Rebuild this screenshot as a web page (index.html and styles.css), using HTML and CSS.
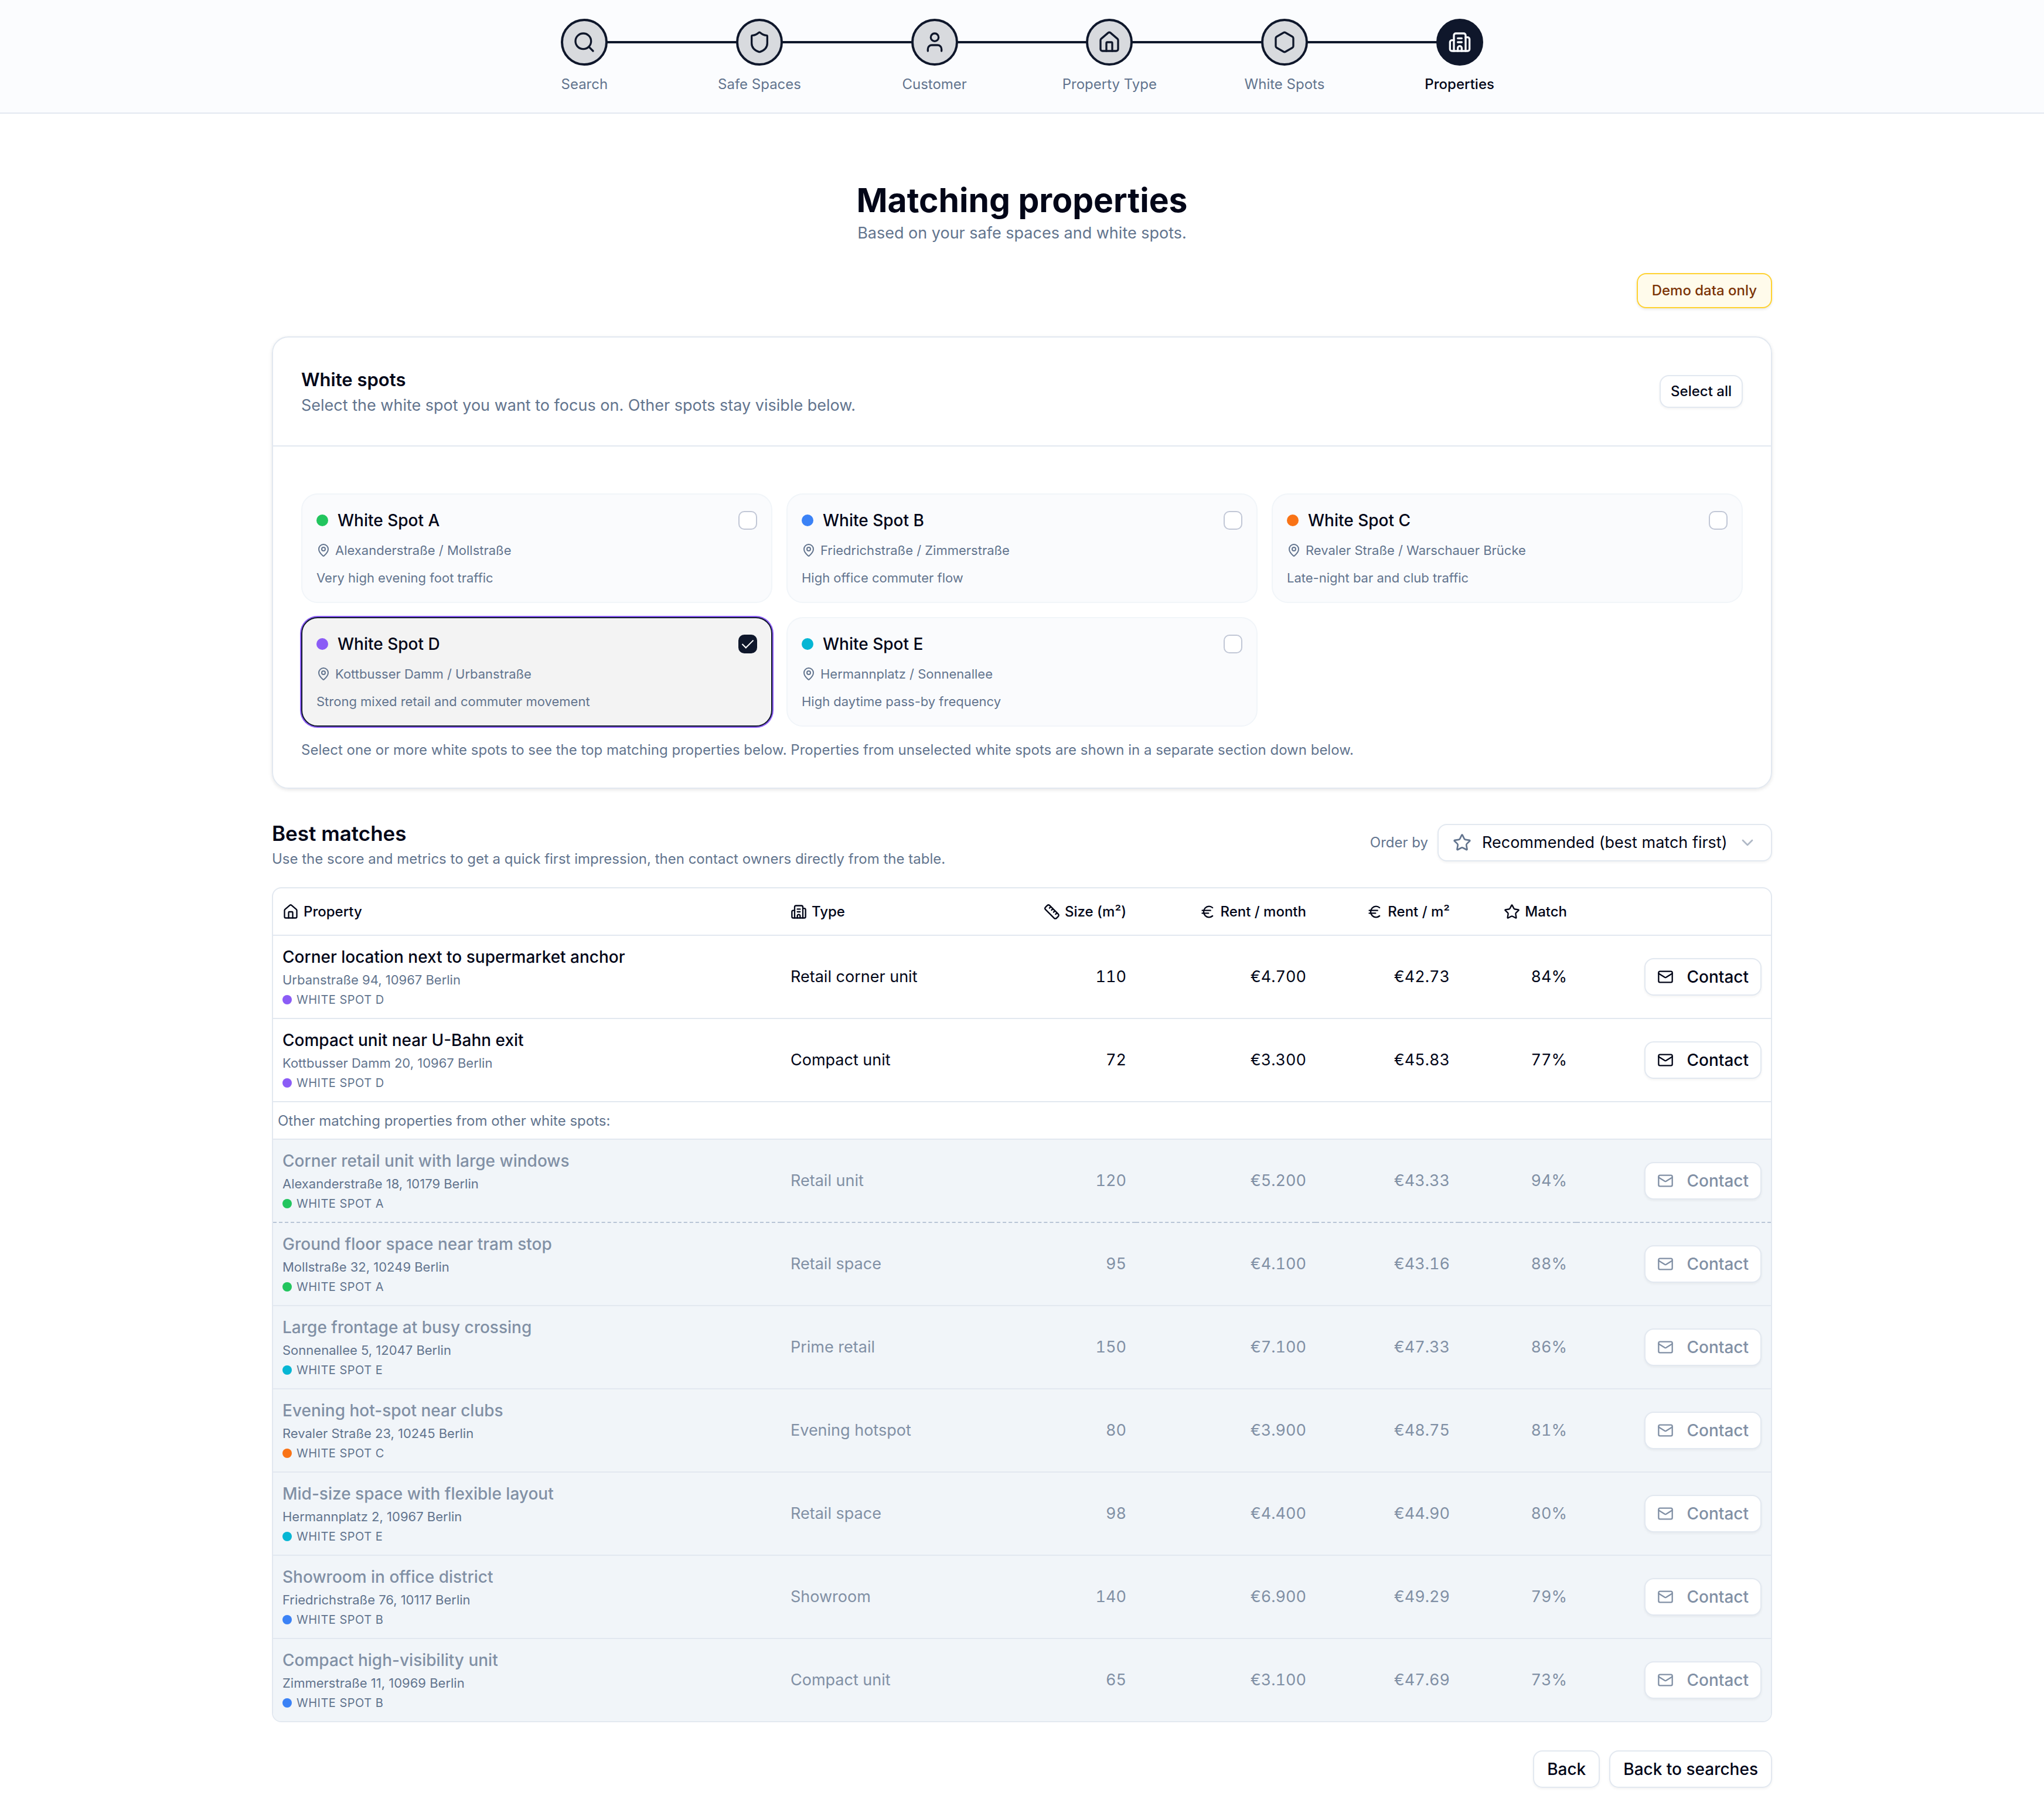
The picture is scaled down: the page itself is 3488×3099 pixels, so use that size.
FILE: index.html
```html
<!DOCTYPE html>
<html lang="en">
<head>
  <meta charset="utf-8">
  <title>Matching properties</title>
  <link rel="stylesheet" href="styles.css">
</head>
<body>
  <svg class="sprite" aria-hidden="true">
    <symbol id="i-search" viewBox="0 0 24 24"><circle cx="11" cy="11" r="8"/><path d="m21 21-4.3-4.3"/></symbol>
    <symbol id="i-shield" viewBox="0 0 24 24"><path d="M20 13c0 5-3.5 7.5-7.66 8.95a1 1 0 0 1-.67-.01C7.5 20.5 4 18 4 13V6a1 1 0 0 1 1-1c2 0 4.5-1.2 6.24-2.72a1.17 1.17 0 0 1 1.52 0C14.51 3.81 17 5 19 5a1 1 0 0 1 1 1z"/></symbol>
    <symbol id="i-user" viewBox="0 0 24 24"><path d="M19 21v-2a4 4 0 0 0-4-4H9a4 4 0 0 0-4 4v2"/><circle cx="12" cy="7" r="4"/></symbol>
    <symbol id="i-house" viewBox="0 0 24 24"><path d="M15 21v-8a1 1 0 0 0-1-1h-4a1 1 0 0 0-1 1v8"/><path d="M3 10a2 2 0 0 1 .709-1.528l7-6a2 2 0 0 1 2.582 0l7 6A2 2 0 0 1 21 10v9a2 2 0 0 1-2 2H5a2 2 0 0 1-2-2z"/></symbol>
    <symbol id="i-hexagon" viewBox="0 0 24 24"><path d="M21 16V8a2 2 0 0 0-1-1.73l-7-4a2 2 0 0 0-2 0l-7 4A2 2 0 0 0 3 8v8a2 2 0 0 0 1 1.73l7 4a2 2 0 0 0 2 0l7-4A2 2 0 0 0 21 16z"/></symbol>
    <symbol id="i-building" viewBox="0 0 24 24"><path d="M10 12h4"/><path d="M10 8h4"/><path d="M14 21v-3a2 2 0 0 0-4 0v3"/><path d="M6 10H4a2 2 0 0 0-2 2v7a2 2 0 0 0 2 2h16a2 2 0 0 0 2-2V9a2 2 0 0 0-2-2h-2"/><path d="M6 21V5a2 2 0 0 1 2-2h8a2 2 0 0 1 2 2v16"/></symbol>
    <symbol id="i-pin" viewBox="0 0 24 24"><path d="M20 10c0 4.993-5.539 10.193-7.399 11.799a1 1 0 0 1-1.202 0C9.539 20.193 4 14.993 4 10a8 8 0 0 1 16 0"/><circle cx="12" cy="10" r="3"/></symbol>
    <symbol id="i-ruler" viewBox="0 0 24 24"><path d="M21.3 15.3a2.4 2.4 0 0 1 0 3.4l-2.6 2.6a2.4 2.4 0 0 1-3.4 0L2.7 8.7a2.41 2.41 0 0 1 0-3.4l2.6-2.6a2.41 2.41 0 0 1 3.4 0Z"/><path d="m14.5 12.5 2-2"/><path d="m11.5 9.5 2-2"/><path d="m8.5 6.5 2-2"/><path d="m17.5 15.5 2-2"/></symbol>
    <symbol id="i-euro" viewBox="0 0 24 24"><path d="M4 10h12"/><path d="M4 14h9"/><path d="M19 6a7.7 7.7 0 0 0-5.2-2A7.9 7.9 0 0 0 6 12c0 4.4 3.5 8 7.8 8 2 0 3.8-.8 5.2-2"/></symbol>
    <symbol id="i-star" viewBox="0 0 24 24"><path d="M11.525 2.295a.53.53 0 0 1 .95 0l2.31 4.679a2.123 2.123 0 0 0 1.595 1.16l5.166.756a.53.53 0 0 1 .294.904l-3.736 3.638a2.123 2.123 0 0 0-.611 1.878l.882 5.14a.53.53 0 0 1-.771.56l-4.618-2.428a2.122 2.122 0 0 0-1.973 0L6.396 21.01a.53.53 0 0 1-.77-.56l.881-5.139a2.122 2.122 0 0 0-.611-1.879L2.16 9.795a.53.53 0 0 1 .294-.906l5.165-.755a2.122 2.122 0 0 0 1.597-1.16z"/></symbol>
    <symbol id="i-mail" viewBox="0 0 24 24"><rect x="2" y="4" width="20" height="16" rx="2"/><path d="m22 7-8.991 5.727a2 2 0 0 1-2.009 0L2 7"/></symbol>
    <symbol id="i-chevron" viewBox="0 0 24 24"><path d="m6 9 6 6 6-6"/></symbol>
  </svg>

  <header class="topbar">
    <ol class="steps">
      <li class="step"><span class="step-circle"><svg class="icon icon-lg"><use href="#i-search"/></svg></span>Search</li>
      <li class="step"><span class="step-circle"><svg class="icon icon-lg"><use href="#i-shield"/></svg></span>Safe Spaces</li>
      <li class="step"><span class="step-circle"><svg class="icon icon-lg"><use href="#i-user"/></svg></span>Customer</li>
      <li class="step"><span class="step-circle"><svg class="icon icon-lg"><use href="#i-house"/></svg></span>Property Type</li>
      <li class="step"><span class="step-circle"><svg class="icon icon-lg"><use href="#i-hexagon"/></svg></span>White Spots</li>
      <li class="step current" aria-current="step"><span class="step-circle"><svg class="icon icon-lg"><use href="#i-building"/></svg></span>Properties</li>
    </ol>
  </header>

  <main class="page">
    <div class="page-title">
      <h1>Matching properties</h1>
      <p>Based on your safe spaces and white spots.</p>
    </div>

    <div class="demo-row"><span class="demo-badge">Demo data only</span></div>

    <section class="panel">
      <div class="panel-header">
        <div>
          <h2>White spots</h2>
          <p>Select the white spot you want to focus on. Other spots stay visible below.</p>
        </div>
        <button type="button" class="btn btn-sm">Select all</button>
      </div>
      <div class="panel-body">
        <div class="spots">
          <label class="spot">
            <span class="spot-head"><span class="dot green"></span>White Spot A<input type="checkbox" class="check"></span>
            <span class="spot-address"><svg class="icon icon-xs"><use href="#i-pin"/></svg>Alexanderstraße / Mollstraße</span>
            <span class="spot-note">Very high evening foot traffic</span>
          </label>
          <label class="spot">
            <span class="spot-head"><span class="dot blue"></span>White Spot B<input type="checkbox" class="check"></span>
            <span class="spot-address"><svg class="icon icon-xs"><use href="#i-pin"/></svg>Friedrichstraße / Zimmerstraße</span>
            <span class="spot-note">High office commuter flow</span>
          </label>
          <label class="spot">
            <span class="spot-head"><span class="dot orange"></span>White Spot C<input type="checkbox" class="check"></span>
            <span class="spot-address"><svg class="icon icon-xs"><use href="#i-pin"/></svg>Revaler Straße / Warschauer Brücke</span>
            <span class="spot-note">Late-night bar and club traffic</span>
          </label>
          <label class="spot selected">
            <span class="spot-head"><span class="dot purple"></span>White Spot D<input type="checkbox" class="check" checked></span>
            <span class="spot-address"><svg class="icon icon-xs"><use href="#i-pin"/></svg>Kottbusser Damm / Urbanstraße</span>
            <span class="spot-note">Strong mixed retail and commuter movement</span>
          </label>
          <label class="spot">
            <span class="spot-head"><span class="dot cyan"></span>White Spot E<input type="checkbox" class="check"></span>
            <span class="spot-address"><svg class="icon icon-xs"><use href="#i-pin"/></svg>Hermannplatz / Sonnenallee</span>
            <span class="spot-note">High daytime pass-by frequency</span>
          </label>
        </div>
        <p class="hint">Select one or more white spots to see the top matching properties below. Properties from unselected white spots are shown in a separate section down below.</p>
      </div>
    </section>

    <section class="matches">
      <div class="matches-header">
        <div>
          <h2>Best matches</h2>
          <p>Use the score and metrics to get a quick first impression, then contact owners directly from the table.</p>
        </div>
        <div class="order">
          <label for="order">Order by</label>
          <div class="select-wrap">
            <svg class="icon icon-md select-star"><use href="#i-star"/></svg>
            <select id="order">
              <option>Recommended (best match first)</option>
            </select>
            <svg class="icon icon-md select-chevron"><use href="#i-chevron"/></svg>
          </div>
        </div>
      </div>

      <div class="table-wrap">
        <table>
          <colgroup>
            <col>
            <col class="col-type">
            <col class="col-size">
            <col class="col-rent">
            <col class="col-sqm">
            <col class="col-match">
            <col class="col-action">
          </colgroup>
          <thead>
            <tr>
              <th><span class="th"><svg class="icon icon-sm"><use href="#i-house"/></svg>Property</span></th>
              <th><span class="th"><svg class="icon icon-sm"><use href="#i-building"/></svg>Type</span></th>
              <th class="num"><span class="th"><svg class="icon icon-sm"><use href="#i-ruler"/></svg>Size (m²)</span></th>
              <th class="num"><span class="th"><svg class="icon icon-sm"><use href="#i-euro"/></svg>Rent / month</span></th>
              <th class="num"><span class="th"><svg class="icon icon-sm"><use href="#i-euro"/></svg>Rent / m²</span></th>
              <th class="num"><span class="th"><svg class="icon icon-sm"><use href="#i-star"/></svg>Match</span></th>
              <th></th>
            </tr>
          </thead>
          <tbody>
            <tr>
              <td>
                <div class="name">Corner location next to supermarket anchor</div>
                <div class="address">Urbanstraße 94, 10967 Berlin</div>
                <div class="tag"><span class="dot dot-sm purple"></span>White Spot D</div>
              </td>
              <td>Retail corner unit</td>
              <td class="num">110</td>
              <td class="num">€4.700</td>
              <td class="num">€42.73</td>
              <td class="num">84%</td>
              <td class="num"><button type="button" class="btn btn-contact"><svg class="icon icon-sm"><use href="#i-mail"/></svg>Contact</button></td>
            </tr>
            <tr>
              <td>
                <div class="name">Compact unit near U-Bahn exit</div>
                <div class="address">Kottbusser Damm 20, 10967 Berlin</div>
                <div class="tag"><span class="dot dot-sm purple"></span>White Spot D</div>
              </td>
              <td>Compact unit</td>
              <td class="num">72</td>
              <td class="num">€3.300</td>
              <td class="num">€45.83</td>
              <td class="num">77%</td>
              <td class="num"><button type="button" class="btn btn-contact"><svg class="icon icon-sm"><use href="#i-mail"/></svg>Contact</button></td>
            </tr>
            <tr class="divider">
              <td colspan="7">Other matching properties from other white spots:</td>
            </tr>
            <tr class="other dashed">
              <td>
                <div class="name">Corner retail unit with large windows</div>
                <div class="address">Alexanderstraße 18, 10179 Berlin</div>
                <div class="tag"><span class="dot dot-sm green"></span>White Spot A</div>
              </td>
              <td>Retail unit</td>
              <td class="num">120</td>
              <td class="num">€5.200</td>
              <td class="num">€43.33</td>
              <td class="num">94%</td>
              <td class="num"><button type="button" class="btn btn-contact"><svg class="icon icon-sm"><use href="#i-mail"/></svg>Contact</button></td>
            </tr>
            <tr class="other">
              <td>
                <div class="name">Ground floor space near tram stop</div>
                <div class="address">Mollstraße 32, 10249 Berlin</div>
                <div class="tag"><span class="dot dot-sm green"></span>White Spot A</div>
              </td>
              <td>Retail space</td>
              <td class="num">95</td>
              <td class="num">€4.100</td>
              <td class="num">€43.16</td>
              <td class="num">88%</td>
              <td class="num"><button type="button" class="btn btn-contact"><svg class="icon icon-sm"><use href="#i-mail"/></svg>Contact</button></td>
            </tr>
            <tr class="other">
              <td>
                <div class="name">Large frontage at busy crossing</div>
                <div class="address">Sonnenallee 5, 12047 Berlin</div>
                <div class="tag"><span class="dot dot-sm cyan"></span>White Spot E</div>
              </td>
              <td>Prime retail</td>
              <td class="num">150</td>
              <td class="num">€7.100</td>
              <td class="num">€47.33</td>
              <td class="num">86%</td>
              <td class="num"><button type="button" class="btn btn-contact"><svg class="icon icon-sm"><use href="#i-mail"/></svg>Contact</button></td>
            </tr>
            <tr class="other">
              <td>
                <div class="name">Evening hot-spot near clubs</div>
                <div class="address">Revaler Straße 23, 10245 Berlin</div>
                <div class="tag"><span class="dot dot-sm orange"></span>White Spot C</div>
              </td>
              <td>Evening hotspot</td>
              <td class="num">80</td>
              <td class="num">€3.900</td>
              <td class="num">€48.75</td>
              <td class="num">81%</td>
              <td class="num"><button type="button" class="btn btn-contact"><svg class="icon icon-sm"><use href="#i-mail"/></svg>Contact</button></td>
            </tr>
            <tr class="other">
              <td>
                <div class="name">Mid-size space with flexible layout</div>
                <div class="address">Hermannplatz 2, 10967 Berlin</div>
                <div class="tag"><span class="dot dot-sm cyan"></span>White Spot E</div>
              </td>
              <td>Retail space</td>
              <td class="num">98</td>
              <td class="num">€4.400</td>
              <td class="num">€44.90</td>
              <td class="num">80%</td>
              <td class="num"><button type="button" class="btn btn-contact"><svg class="icon icon-sm"><use href="#i-mail"/></svg>Contact</button></td>
            </tr>
            <tr class="other">
              <td>
                <div class="name">Showroom in office district</div>
                <div class="address">Friedrichstraße 76, 10117 Berlin</div>
                <div class="tag"><span class="dot dot-sm blue"></span>White Spot B</div>
              </td>
              <td>Showroom</td>
              <td class="num">140</td>
              <td class="num">€6.900</td>
              <td class="num">€49.29</td>
              <td class="num">79%</td>
              <td class="num"><button type="button" class="btn btn-contact"><svg class="icon icon-sm"><use href="#i-mail"/></svg>Contact</button></td>
            </tr>
            <tr class="other">
              <td>
                <div class="name">Compact high-visibility unit</div>
                <div class="address">Zimmerstraße 11, 10969 Berlin</div>
                <div class="tag"><span class="dot dot-sm blue"></span>White Spot B</div>
              </td>
              <td>Compact unit</td>
              <td class="num">65</td>
              <td class="num">€3.100</td>
              <td class="num">€47.69</td>
              <td class="num">73%</td>
              <td class="num"><button type="button" class="btn btn-contact"><svg class="icon icon-sm"><use href="#i-mail"/></svg>Contact</button></td>
            </tr>
          </tbody>
        </table>
      </div>
    </section>

    <div class="actions">
      <button type="button" class="btn">Back</button>
      <button type="button" class="btn">Back to searches</button>
    </div>
  </main>
</body>
</html>
```

FILE: styles.css
```css
:root {
  --ink: #020618;
  --navy: #0f172b;
  --muted: #62748e;
  --faded: #8190a5;
  --border: #e2e8f0;
  --soft: #f1f5f9;
}
* {
  box-sizing: border-box;
}
body {
  margin: 0;
  font-family: Inter, sans-serif;
  font-size: 27px;
  line-height: 40px;
  color: var(--ink);
  background: #fff;
}
h1, h2, p, ol {
  margin: 0;
  padding: 0;
}
button, select, input {
  font: inherit;
  color: inherit;
  margin: 0;
}
.sprite {
  position: absolute;
  width: 0;
  height: 0;
}
.icon {
  flex: none;
  fill: none;
  stroke: currentColor;
  stroke-width: 2;
  stroke-linecap: round;
  stroke-linejoin: round;
}
.icon-xs { width: 24px; height: 24px; }
.icon-sm { width: 28px; height: 28px; }
.icon-md { width: 32px; height: 32px; }
.icon-lg { width: 40px; height: 40px; }

.dot {
  flex: none;
  width: 20px;
  height: 20px;
  border-radius: 50%;
}
.dot-sm {
  width: 16px;
  height: 16px;
}
.green { background: #22c55e; }
.blue { background: #3b82f6; }
.orange { background: #f97316; }
.purple { background: #8b5cf6; }
.cyan { background: #06b6d4; }

/* stepper */
.topbar {
  padding: 32px;
  background: #fbfcfe;
  border-bottom: 2px solid var(--border);
}
.steps {
  display: grid;
  grid-template-columns: repeat(6, 1fr);
  max-width: 1792px;
  margin: 0 auto;
  list-style: none;
}
.step {
  position: relative;
  display: flex;
  flex-direction: column;
  align-items: center;
  gap: 16px;
  font-size: 24px;
  line-height: 32px;
  color: var(--muted);
}
.step + .step::before {
  content: "";
  position: absolute;
  top: 38px;
  right: 50%;
  width: 100%;
  height: 4px;
  background: var(--navy);
}
.step-circle {
  position: relative;
  z-index: 1;
  display: flex;
  align-items: center;
  justify-content: center;
  width: 80px;
  height: 80px;
  border: 4px solid var(--navy);
  border-radius: 50%;
  background: #d8dade;
  color: var(--navy);
}
.step.current {
  font-weight: 500;
  color: var(--ink);
}
.step.current .step-circle {
  background: var(--navy);
  color: #f8fafc;
}

/* page */
.page {
  max-width: 2560px;
  margin: 0 auto;
  padding: 112px 0 48px;
}
.page-title {
  text-align: center;
  color: var(--muted);
}
.page-title h1 {
  font-size: 57px;
  line-height: 72px;
  font-weight: 700;
  color: var(--ink);
}
.demo-row {
  display: flex;
  justify-content: flex-end;
  margin: 48px 0;
}
.demo-badge {
  padding: 12px 24px;
  border: 2px solid #ffd230;
  border-radius: 16px;
  background: #fffbeb;
  box-shadow: 0 2px 4px rgba(0, 0, 0, 0.1);
  font-size: 24px;
  line-height: 32px;
  font-weight: 500;
  color: #7b3306;
}
.btn {
  display: inline-flex;
  align-items: center;
  justify-content: center;
  height: 64px;
  padding: 0 22px;
  border: 2px solid var(--border);
  border-radius: 16px;
  background: #fff;
  box-shadow: 0 2px 4px rgba(0, 0, 0, 0.05);
  font-size: 28px;
  font-weight: 500;
  white-space: nowrap;
}
.btn-sm {
  height: 56px;
  padding: 0 17px;
  font-size: 24px;
}
.btn-contact {
  gap: 22px;
  padding: 0 20px;
}

/* white spots */
.panel {
  border: 2px solid var(--border);
  border-radius: 28px;
  box-shadow: 0 2px 6px rgba(0, 0, 0, 0.1);
}
.panel-header {
  display: flex;
  align-items: center;
  justify-content: space-between;
  padding: 48px;
  border-bottom: 2px solid var(--border);
}
.panel-header h2 {
  font-size: 31px;
  line-height: 48px;
  font-weight: 600;
}
.panel-header p {
  color: var(--muted);
}
.panel-body {
  padding: 80px 48px 48px;
}
.spots {
  display: grid;
  grid-template-columns: repeat(3, 1fr);
  gap: 24px;
}
.spot {
  display: flex;
  flex-direction: column;
  gap: 14px;
  padding: 24px;
  border: 2px solid var(--soft);
  border-radius: 28px;
  background: #fafbfd;
  font-size: 22px;
  color: var(--muted);
}
.spot.selected {
  border-color: var(--navy);
  background: #f3f3f3;
  box-shadow: 0 0 0 2px #8b5cf6;
}
.spot-head {
  display: flex;
  align-items: center;
  gap: 16px;
  font-size: 28px;
  font-weight: 500;
  color: var(--ink);
}
.spot-address {
  display: flex;
  align-items: center;
  gap: 8px;
  line-height: 34px;
}
.spot-note {
  line-height: 33px;
}
.check {
  appearance: none;
  display: flex;
  justify-content: center;
  width: 32px;
  height: 32px;
  margin-left: auto;
  border: 2px solid #c1c7d6;
  border-radius: 10px;
  background: #fff;
}
.check:checked {
  border-color: var(--navy);
  background: var(--navy);
}
.check:checked::after {
  content: "";
  width: 8px;
  height: 17px;
  margin-top: 2px;
  border: solid #fff;
  border-width: 0 2px 2px 0;
  transform: rotate(45deg);
}
.hint {
  margin-top: 24px;
  font-size: 24px;
  line-height: 32px;
  color: var(--muted);
}

/* matches */
.matches {
  margin-top: 48px;
}
.matches-header {
  display: flex;
  align-items: center;
  justify-content: space-between;
  margin-bottom: 32px;
}
.matches-header h2 {
  font-size: 35px;
  line-height: 56px;
  font-weight: 600;
}
.matches-header p,
.order label {
  font-size: 24px;
  line-height: 32px;
  color: var(--muted);
}
.order {
  display: flex;
  align-items: center;
  gap: 16px;
}
.select-wrap {
  position: relative;
}
.select-wrap select {
  appearance: none;
  display: block;
  height: 64px;
  padding: 0 74px;
  border: 2px solid var(--border);
  border-radius: 16px;
  background: #fff;
  box-shadow: 0 2px 4px rgba(0, 0, 0, 0.05);
}
.select-star,
.select-chevron {
  position: absolute;
  top: 16px;
  pointer-events: none;
  color: var(--muted);
}
.select-star {
  left: 26px;
}
.select-chevron {
  right: 26px;
  opacity: 0.5;
}
.table-wrap {
  overflow: hidden;
  border: 2px solid var(--border);
  border-radius: 16px;
}
table {
  width: 100%;
  table-layout: fixed;
  border-collapse: separate;
  border-spacing: 0;
}
.col-type { width: 358px; }
.col-size { width: 247px; }
.col-rent { width: 307px; }
.col-sqm { width: 245px; }
.col-match { width: 200px; }
.col-action { width: 332px; }
th,
td {
  padding: 16px;
  border-bottom: 2px solid var(--border);
  text-align: left;
  vertical-align: middle;
}
th {
  height: 81px;
  font-size: 24px;
  line-height: 32px;
  font-weight: 500;
}
.th {
  display: inline-flex;
  align-items: center;
  gap: 8px;
  vertical-align: top;
}
.num {
  text-align: right;
}
td.num {
  font-variant-numeric: tabular-nums;
}
td .btn {
  vertical-align: top;
}
tr:last-child td {
  border-bottom: 0;
}
.name {
  font-size: 28px;
  font-weight: 500;
}
.address {
  margin: 4px 0;
  font-size: 22px;
  line-height: 30px;
  color: var(--muted);
}
.tag {
  display: flex;
  align-items: center;
  gap: 8px;
  font-size: 20px;
  line-height: 30px;
  letter-spacing: 0.025em;
  text-transform: uppercase;
  color: var(--muted);
}
.divider td {
  padding: 16px 8px 14px;
  font-size: 24px;
  line-height: 32px;
  color: var(--muted);
}
.other td {
  background: var(--soft);
  color: var(--faded);
}
.dashed td {
  border-bottom: 2px dashed #b8c5d6;
}
.actions {
  display: flex;
  justify-content: flex-end;
  gap: 16px;
  margin-top: 48px;
}
```
